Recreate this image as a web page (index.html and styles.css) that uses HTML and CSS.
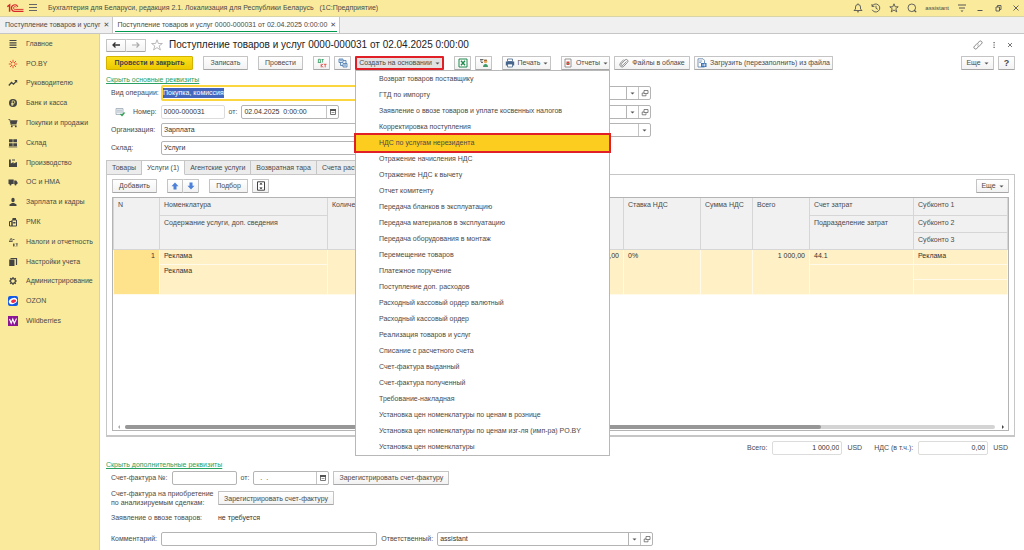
FILE: index.html
```html
<!DOCTYPE html>
<html lang="ru">
<head>
    <meta charset="UTF-8">
    <meta name="viewport" content="width=device-width, initial-scale=1.0">
    <title>Поступление товаров и услуг</title>
    <link rel="stylesheet" href="styles.css">
</head>
<body>
    <!-- Shared icons -->
    <svg class="sprite" aria-hidden="true">
        <symbol id="calendar" viewBox="0 0 8 8"><path d="M1.500 2.500h5v4h-5z" fill="none" stroke="#777"/><path d="M1 1h6v2H1z" fill="#555"/><path d="M2.500 4.500h3" stroke="#999"/></symbol>
        <symbol id="open" viewBox="0 0 8 8"><path d="M3 1.5h4v3H3zM1.2 4v2.8H5V5.2M1.2 4H3" fill="none" stroke="#666" stroke-width=".8"/></symbol>
        <symbol id="caret" viewBox="0 0 5 3"><path d="M.5.5h4l-2 2z" fill="#555"/></symbol>
    </svg>

    <header class="titlebar">
        <svg class="logo" viewBox="0 0 17 10"><path d="M.3 3.600 2.600 2V8.800" fill="none" stroke="#d8262c" stroke-width="1.500"/><path d="M10.800 3.800A3.300 3.300 0 1 0 8.200 8.400H16.500" fill="none" stroke="#d8262c" stroke-width="1.200"/><path d="M9.200 4.400A1.400 1.400 0 1 0 8.200 6.400H16.500" fill="none" stroke="#d8262c" stroke-width=".9"/></svg>
        <button class="plain" aria-label="Меню"><svg class="icon" viewBox="0 0 10 10"><path d="M1 1.500h8M1 4.500h8M1 7.500h8" stroke="#666"/></svg></button>
        <span class="app-name">Бухгалтерия для Беларуси, редакция 2.1. Локализация для Республики Беларусь &nbsp; (1С:Предприятие)</span>
        <nav class="window-tools">
            <button class="plain" aria-label="Уведомления"><svg class="icon" viewBox="0 0 10 10"><path d="M1 7.5h8L7.5 6V4a2.5 2.5 0 0 0-5 0v2zM4 8.8h2M5 1V.4" fill="none" stroke="#555" stroke-width=".9"/></svg></button>
            <button class="plain" aria-label="История"><svg class="icon" viewBox="0 0 10 10"><path d="M1.2 3.2A4 4 0 1 1 1.2 6.8M1 1v2.4h2.4M5 2.8V5.3l1.8 1" fill="none" stroke="#555" stroke-width=".9"/></svg></button>
            <button class="plain" aria-label="Избранное"><svg class="icon" viewBox="0 0 10 10"><path d="m5 .8 1.2 3h3L6.8 5.7l1 3.2L5 7 2.200 8.900l1-3.200L.8 3.800h3z" fill="none" stroke="#555" stroke-width=".9"/></svg></button>
            <button class="plain" aria-label="Поиск"><svg class="icon" viewBox="0 0 10 10"><circle cx="4.800" cy="4.800" r="3.800" fill="none" stroke="#555" stroke-width=".9"/><path d="M7 7l2.200 2.200" stroke="#555" stroke-width="1.200"/></svg></button>
            <span class="user">assistant</span>
            <button class="plain" aria-label="Настройки"><svg class="icon" viewBox="0 0 10 10"><path d="M1 2h8M2 5h6" stroke="#555"/><path d="M3.500 7.500h3L5 9z" fill="#555"/></svg></button>
            <button class="plain" aria-label="Свернуть"><svg class="icon" viewBox="0 0 10 10"><path d="M2.500 7.500h5" stroke="#555"/></svg></button>
            <button class="plain" aria-label="Развернуть"><svg class="icon" viewBox="0 0 10 10"><path d="M3 4h3.500v4H3zM4.500 4V2.500H8V6.500H6.500" fill="none" stroke="#555" stroke-width=".9"/></svg></button>
            <button class="plain" aria-label="Закрыть"><svg class="icon" viewBox="0 0 10 10"><path d="M2.500 2.500l5 5M7.500 2.500l-5 5" stroke="#555" stroke-width=".9"/></svg></button>
        </nav>
    </header>

    <nav class="doc-tabs">
        <a class="doc-tab" href="#list">Поступление товаров и услуг <span class="close">✕</span></a>
        <a class="doc-tab current" href="#doc">Поступление товаров и услуг 0000-000031 от 02.04.2025 0:00:00 <span class="close">✕</span></a>
    </nav>

    <div class="workspace">
        <nav class="sidebar">
            <div class="sections">
                <a href="#"><svg class="icon" viewBox="0 0 10 10"><path d="M1.500 1.500h7M1.500 3.800h7M1.500 6.200h7M1.500 8.500h7" stroke="#444" stroke-width="1.200"/></svg>Главное</a>
                <a href="#"><svg class="icon" viewBox="0 0 10 10"><path d="M5 .8v3M5 6.200v3M.8 5h3M6.200 5h3M2 2l2 2M6 6l2 2M8 2 6 4M2 8l2-2" stroke="#e2452c" stroke-width=".9"/></svg>PO.BY</a>
                <a href="#"><svg class="icon" viewBox="0 0 10 10"><path d="M.8 7.500 3.500 4.500 5.500 6.200 8.500 3" fill="none" stroke="#444" stroke-width="1.300"/><path d="M6.200 2h3v3z" fill="#444"/></svg>Руководителю</a>
                <a href="#"><svg class="icon" viewBox="0 0 10 10"><circle cx="5" cy="5" r="4" fill="#444"/><path d="M4.200 8V2.800h1.300a1.300 1.300 0 0 1 0 2.700H3.200M3.200 6.700h2.500" fill="none" stroke="#f9eb9b" stroke-width=".8"/></svg>Банк и касса</a>
                <a href="#"><svg class="icon" viewBox="0 0 10 10"><path d="M.5 1.500h1.300L3.200 7h5.300" fill="none" stroke="#444" stroke-width=".9"/><path d="M2.200 2.200h7.300L8.500 6H3.200z" fill="#444"/><circle cx="3.800" cy="8.400" r=".9" fill="#444"/><circle cx="7.800" cy="8.400" r=".9" fill="#444"/></svg>Покупки и продажи</a>
                <a href="#"><svg class="icon" viewBox="0 0 10 10"><path d="M1 1.200h3.700v3H1zM5.300 1.200H9v3H5.300zM1 5.200h3.700v3H1zM5.300 5.200H9v3H5.300z" fill="#444"/><path d="M.8 9h8.400" stroke="#444" stroke-width=".7"/></svg>Склад</a>
                <a href="#"><svg class="icon" viewBox="0 0 10 10"><path d="M1 9V1.500h1.800v4L5.500 4v1.500L9 4v5z" fill="#444"/><path d="M4 2h3" stroke="#444"/></svg>Производство</a>
                <a href="#"><svg class="icon" viewBox="0 0 10 10"><path d="M.5 2.500h5.200v4.500H.5zM6.200 3.500h2l1.300 1.700V7H6.200z" fill="#444"/><circle cx="2.500" cy="7.500" r="1" fill="#444"/><circle cx="7.500" cy="7.500" r="1" fill="#444"/></svg>ОС и НМА</a>
                <a href="#"><svg class="icon" viewBox="0 0 10 10"><ellipse cx="5" cy="3" rx="1.700" ry="2.200" fill="#444"/><path d="M1.500 9V7.500L4 6h2l2.500 1.500V9z" fill="#444"/></svg>Зарплата и кадры</a>
                <a href="#"><svg class="icon" viewBox="0 0 10 10"><path d="M1.500 4.500H4V9H1.500zM4 3h4.500v6H4z" fill="none" stroke="#444"/><path d="M4.500 1H8v2H4.500zM5.200 5h2.300v1.500H5.200z" fill="#444"/></svg>РМК</a>
                <a href="#"><svg class="icon" viewBox="0 0 10 10"><path d="M1 4.500h3.500M1.700 4.500 2.500 1.800H4V4.500M5.500 6.500v3M7 6.500 5.700 8 7 9.500M8 6.800h1.800M8.900 6.800v2.700M5 2.500h1.500" fill="none" stroke="#444" stroke-width=".8"/></svg>Налоги и отчетность</a>
                <a href="#"><svg class="icon" viewBox="0 0 10 10"><path d="M1.200 2.500h5.300V9H1.200z" fill="#444"/><path d="M2.500 1.500h6v6.500" fill="none" stroke="#444" stroke-width="1.200"/></svg>Настройки учета</a>
                <a href="#"><svg class="icon" viewBox="0 0 10 10"><circle cx="5" cy="5" r="2.400" fill="none" stroke="#444" stroke-width="1.200"/><path d="M5 1v1.500M5 7.500V9M1 5h1.500M7.500 5H9M2.200 2.200l1 1M6.800 6.800l1 1M7.800 2.200l-1 1M2.200 7.800l1-1" stroke="#444" stroke-width="1.200"/></svg>Администрирование</a>
                <a href="#"><svg class="icon" viewBox="0 0 10 10"><rect width="10" height="10" rx="2" fill="#1259e8"/><ellipse cx="5" cy="5" rx="4.300" ry="3" fill="#fff" transform="rotate(-20 5 5)"/><ellipse cx="5.500" cy="5.300" rx="2.600" ry="1.600" fill="#ee2b4b" transform="rotate(-15 5 5)"/></svg>OZON</a>
                <a href="#"><svg class="icon" viewBox="0 0 10 10"><rect width="10" height="10" fill="#8b1593"/><path d="M1.500 3 3.200 7.300 4.800 3 6.300 7.300 8.500 2.500" fill="none" stroke="#fff" stroke-width="1.100"/></svg>Wildberries</a>
            </div>
        </nav>

        <main class="document">
            <div class="heading">
                <div class="button-pair">
                    <button class="btn" aria-label="Назад"><svg class="icon" viewBox="0 0 10 10"><path d="M9 5H2M4.500 2.500 2 5l2.500 2.500" fill="none" stroke="#333" stroke-width="1.300"/></svg></button>
                    <button class="btn" aria-label="Вперед"><svg class="icon" viewBox="0 0 10 10"><path d="M1 5h7M5.500 2.500 8 5 5.500 7.500" fill="none" stroke="#aaa" stroke-width="1.200"/></svg></button>
                </div>
                <svg class="star" viewBox="0 0 12 12"><path d="m6 .8 1.400 3.700h4L8.200 6.900l1.200 4L6 8.600 2.600 10.900l1.200-4L.6 4.500h4z" fill="none" stroke="#aaa" stroke-width=".8"/></svg>
                <h1>Поступление товаров и услуг 0000-000031 от 02.04.2025 0:00:00</h1>
                <div class="heading-tools">
                    <button class="plain" aria-label="Ссылка"><svg class="icon" viewBox="0 0 10 10"><path d="M4.500 3.200 6.300 1.500a1.600 1.600 0 0 1 2.300 2.300L6.500 5.800a1.500 1.500 0 0 1-2 0M5.500 6.800 3.700 8.500a1.600 1.600 0 0 1-2.300-2.300L3.500 4.200a1.500 1.500 0 0 1 2 0" fill="none" stroke="#777" stroke-width=".9"/></svg></button>
                    <button class="plain" aria-label="Действия"><svg class="icon" viewBox="0 0 10 10"><path d="M4.500 2h1.200v1.200H4.500zM4.500 4.400h1.200v1.200H4.500zM4.500 6.800h1.200V8H4.500z" fill="#555"/></svg></button>
                    <button class="plain" aria-label="Закрыть"><svg class="icon" viewBox="0 0 10 10"><path d="M3 3l4 4M7 3 3 7" stroke="#777"/></svg></button>
                </div>
            </div>

            <div class="toolbar">
                <button class="btn primary w-post">Провести и закрыть</button>
                <button class="btn w-short">Записать</button>
                <button class="btn w-short">Провести</button>
                <div class="tool-group">
                    <button class="btn square" aria-label="Дт Кт"><svg class="icon" viewBox="0 0 10 10"><path d="M.8 4.500h3.400M1.400 4V1.300h2V4M4.500 1.500h2.200M5.600 1.500v3" fill="none" stroke="#2a9a58" stroke-width=".8"/><path d="M4.200 5.800v3.600M6 5.800 4.500 7.600 6 9.400M7 6.300h2.500M8.200 6.300v3" fill="none" stroke="#e03a30" stroke-width=".8"/></svg></button>
                    <button class="btn square" aria-label="Структура подчиненности"><svg class="icon" viewBox="0 0 10 10"><path d="M1 1h4v3.500H1zM5 5.500h4V9H5zM2.500 4.500v3H5M5 2.500h3v3" fill="#dbe8f6" stroke="#4878ae" stroke-width=".8"/><path d="M2 2.200h2M6 7h2" stroke="#4878ae" stroke-width=".8"/></svg></button>
                    <div class="dropdown">
                        <button class="btn create-btn">Создать на основании <svg class="caret"><use href="#caret"/></svg></button>
                        <ul class="menu">
                            <li><a href="#">Возврат товаров поставщику</a></li>
                            <li><a href="#">ГТД по импорту</a></li>
                            <li><a href="#">Заявление о ввозе товаров и уплате косвенных налогов</a></li>
                            <li><a href="#">Корректировка поступления</a></li>
                            <li class="selected"><a href="#">НДС по услугам нерезидента</a></li>
                            <li><a href="#">Отражение начисления НДС</a></li>
                            <li><a href="#">Отражение НДС к вычету</a></li>
                            <li><a href="#">Отчет комитенту</a></li>
                            <li><a href="#">Передача бланков в эксплуатацию</a></li>
                            <li><a href="#">Передача материалов в эксплуатацию</a></li>
                            <li><a href="#">Передача оборудования в монтаж</a></li>
                            <li><a href="#">Перемещение товаров</a></li>
                            <li><a href="#">Платежное поручение</a></li>
                            <li><a href="#">Поступление доп. расходов</a></li>
                            <li><a href="#">Расходный кассовый ордер валютный</a></li>
                            <li><a href="#">Расходный кассовый ордер</a></li>
                            <li><a href="#">Реализация товаров и услуг</a></li>
                            <li><a href="#">Списание с расчетного счета</a></li>
                            <li><a href="#">Счет-фактура выданный</a></li>
                            <li><a href="#">Счет-фактура полученный</a></li>
                            <li><a href="#">Требование-накладная</a></li>
                            <li><a href="#">Установка цен номенклатуры по ценам в рознице</a></li>
                            <li><a href="#">Установка цен номенклатуры по ценам изг-ля (имп-ра) PO.BY</a></li>
                            <li><a href="#">Установка цен номенклатуры</a></li>
                        </ul>
                    </div>
                </div>
                <div class="tool-group">
                    <button class="btn square" aria-label="Excel"><svg class="icon" viewBox="0 0 10 10"><path d="M1 1h8v8H1z" fill="#fff" stroke="#1f8a4c"/><path d="M3 2.800l4 4.400M7 2.800 3 7.200" stroke="#1f8a4c" stroke-width="1.400"/></svg></button>
                    <button class="btn square" aria-label="Контрагент"><svg class="icon" viewBox="0 0 10 10"><path d="M1 1.500h3.500M1 3h2.500M2 4.500h2" stroke="#444" stroke-width=".8"/><circle cx="6.500" cy="3.500" r="1.800" fill="#e8a862"/><path d="M4 9c0-4 5-4 5 0z" fill="#3d9a68"/><path d="M5 2.200h3" stroke="#7d4d20"/></svg></button>
                </div>
                <button class="btn w-print"><svg class="icon" viewBox="0 0 10 10"><path d="M2.500 1h5v2.500h-5z" fill="#fff" stroke="#47658c" stroke-width=".8"/><path d="M.8 3.500h8.400v4H.8z" fill="#47658c"/><path d="M2.500 6h5v3h-5z" fill="#fff" stroke="#47658c" stroke-width=".8"/></svg>Печать <svg class="caret"><use href="#caret"/></svg></button>
                <div class="tool-group">
                    <button class="btn w-print"><svg class="icon" viewBox="0 0 10 10"><path d="M2 1h6v8H2z" fill="#fff" stroke="#888" stroke-width=".9"/><path d="M3.500 3.500h3v3.500h-3z" fill="#d5433c"/><path d="M3.500 5.500h3" stroke="#5aa06a" stroke-width=".8"/></svg>Отчеты <svg class="caret"><use href="#caret"/></svg></button>
                    <button class="btn w-files"><svg class="icon" viewBox="0 0 10 10"><path d="M7.500 3.500 4 7.200a1 1 0 0 1-1.500-1.500L6 2a1.700 1.700 0 0 1 2.500 2.400L4.800 8.300A2.300 2.300 0 0 1 1.500 5L4.800 1.500" fill="none" stroke="#777" stroke-width=".8"/></svg>Файлы в облаке</button>
                    <button class="btn w-load"><svg class="icon" viewBox="0 0 10 10"><path d="M1 .8h5l1.500 1.500V9H1z" fill="#fff" stroke="#5a7fa8" stroke-width=".8"/><path d="M2.200 3h3M2.200 4.500h2" stroke="#5a7fa8" stroke-width=".7"/><path d="M4 5h5.500v4H4z" fill="#3f78b8"/><path d="M5 7h3M7 5.800 8.300 7 7 8.200" fill="none" stroke="#fff" stroke-width=".7"/></svg>Загрузить (перезаполнить) из файла</button>
                </div>
                <div class="tool-group end">
                    <button class="btn w-more">Еще <svg class="caret"><use href="#caret"/></svg></button>
                    <button class="btn square help">?</button>
                </div>
            </div>

            <a class="toggle" href="#main">Скрыть основные реквизиты</a>

            <form class="details">
                <div class="line">
                    <label for="operation">Вид операции:</label>
                    <div class="field focused wide">
                        <select id="operation" class="picked"><option>Покупка, комиссия</option></select>
                    </div>
                    <div class="field side">
                        <input type="text" aria-label="Контрагент"><button type="button" class="arrow" aria-label="Выбрать"><svg class="caret"><use href="#caret"/></svg></button><button type="button" aria-label="Открыть"><svg class="mini"><use href="#open"/></svg></button>
                    </div>
                </div>
                <div class="line">
                    <div class="number">
                        <svg class="icon" viewBox="0 0 10 10"><path d="M1 1.500h7v6H1z" fill="#eef2f6" stroke="#9aa8b5" stroke-width=".8"/><path d="M2 3.200h5M2 5h5" stroke="#9aa8b5" stroke-width=".7"/><path d="M5.500 7 7 8.500 9.500 5.500" fill="none" stroke="#2ea24e" stroke-width="1.300"/></svg>
                        <label for="number">Номер:</label>
                        <div class="field pale"><input type="text" id="number" value="0000-000031"></div>
                        <label for="date">от:</label>
                        <div class="field date"><input type="text" id="date" value="02.04.2025  0:00:00"><button type="button" aria-label="Календарь"><svg class="mini"><use href="#calendar"/></svg></button></div>
                    </div>
                    <div class="field side">
                        <input type="text" aria-label="Договор"><button type="button" class="arrow" aria-label="Выбрать"><svg class="caret"><use href="#caret"/></svg></button><button type="button" aria-label="Открыть"><svg class="mini"><use href="#open"/></svg></button>
                    </div>
                </div>
                <div class="line">
                    <label for="organization">Организация:</label>
                    <div class="field wide"><select id="organization"><option>Зарплата</option></select></div>
                    <div class="field side"><input type="text" aria-label="Счет"><button type="button" aria-label="Выбрать"><svg class="caret"><use href="#caret"/></svg></button></div>
                </div>
                <div class="line">
                    <label for="stock">Склад:</label>
                    <div class="field wide"><select id="stock"><option>Услуги</option></select></div>
                    <div class="side"></div>
                </div>
            </form>

            <section class="pages">
                <div class="page-tabs">
                    <button>Товары</button>
                    <button class="current">Услуги (1)</button>
                    <button>Агентские услуги</button>
                    <button>Возвратная тара</button>
                    <button>Счета расчетов</button>
                </div>
                <div class="page">
                    <div class="page-tools">
                        <button class="btn w-short">Добавить</button>
                        <div class="button-pair">
                            <button class="btn" aria-label="Вверх"><svg class="icon" viewBox="0 0 10 10"><path d="M5 1.500 8.500 5.200h-2v3.300h-3V5.200h-2z" fill="#4d80d8"/></svg></button>
                            <button class="btn" aria-label="Вниз"><svg class="icon" viewBox="0 0 10 10"><path d="M5 8.500 1.500 4.800h2V1.500h3v3.300h2z" fill="#4d80d8"/></svg></button>
                        </div>
                        <div class="tool-group">
                            <button class="btn w-pick">Подбор</button>
                            <button class="btn square" aria-label="Изменить высоту"><svg class="icon" viewBox="0 0 10 10"><path d="M1.500.8h7v8.400h-7z" fill="#fff" stroke="#444"/><path d="M5 2v1.500M5 6.500V8M3.800 3.300 5 2l1.200 1.300zM3.800 6.700 5 8l1.200-1.300z" fill="#444" stroke="#444" stroke-width=".5"/></svg></button>
                        </div>
                        <button class="btn w-more end">Еще <svg class="caret"><use href="#caret"/></svg></button>
                    </div>
                    <div class="grid">
                        <table>
                            <colgroup>
                                <col class="c-n"><col class="c-item"><col class="c-count"><col class="c-sum"><col class="c-rate"><col class="c-vat"><col class="c-total"><col class="c-account"><col class="c-sub">
                            </colgroup>
                            <thead>
                                <tr><th rowspan="3">N</th><th>Номенклатура</th><th rowspan="3">Количество</th><th rowspan="3"></th><th rowspan="3">Ставка НДС</th><th rowspan="3">Сумма НДС</th><th rowspan="3">Всего</th><th>Счет затрат</th><th>Субконто 1</th></tr>
                                <tr><th rowspan="2">Содержание услуги, доп. сведения</th><th rowspan="2">Подразделение затрат</th><th>Субконто 2</th></tr>
                                <tr><th>Субконто 3</th></tr>
                            </thead>
                            <tbody>
                                <tr><td rowspan="3" class="num active">1</td><td>Реклама</td><td rowspan="3"></td><td rowspan="3" class="num">1 000,00</td><td rowspan="3">0%</td><td rowspan="3"></td><td rowspan="3" class="num">1 000,00</td><td>44.1</td><td>Реклама</td></tr>
                                <tr><td rowspan="2">Реклама</td><td rowspan="2"></td><td></td></tr>
                                <tr><td></td></tr>
                            </tbody>
                        </table>
                        <div class="scroll">
                            <span class="scroll-left"></span>
                            <div class="track"><div class="thumb"></div></div>
                            <span class="scroll-right"></span>
                        </div>
                    </div>
                </div>
            </section>

            <div class="totals">
                <label for="total">Всего:</label>
                <div class="field pale"><input type="text" id="total" value="1 000,00"></div>
                <span>USD</span>
                <label for="vat" class="vat-label">НДС (в т.ч.):</label>
                <div class="field pale"><input type="text" id="vat" value="0,00"></div>
                <span>USD</span>
            </div>

            <a class="toggle" href="#extra">Скрыть дополнительные реквизиты</a>

            <form class="extra">
                <div class="line">
                    <label for="invoice">Счет-фактура №:</label>
                    <div class="field invoice"><input type="text" id="invoice"></div>
                    <label for="invoiceDate">от:</label>
                    <div class="field invoice-date"><input type="text" id="invoiceDate" value="  .  ."><button type="button" aria-label="Календарь"><svg class="mini"><use href="#calendar"/></svg></button></div>
                    <button type="button" class="btn w-register">Зарегистрировать счет-фактуру</button>
                </div>
                <div class="line tall">
                    <span class="caption">Счет-фактура на приобретение<br>по анализируемым сделкам:</span>
                    <button type="button" class="btn w-register">Зарегистрировать счет-фактуру</button>
                </div>
                <div class="line">
                    <span class="caption">Заявление о ввозе товаров:</span>
                    <span class="dark">не требуется</span>
                </div>
                <div class="line last">
                    <label for="comment">Комментарий:</label>
                    <div class="field wide"><input type="text" id="comment"></div>
                    <label for="responsible">Ответственный:</label>
                    <div class="field wide"><input type="text" id="responsible" value="assistant"><button type="button" class="arrow" aria-label="Выбрать"><svg class="caret"><use href="#caret"/></svg></button><button type="button" aria-label="Открыть"><svg class="mini"><use href="#open"/></svg></button></div>
                </div>
            </form>
        </main>
    </div>
</body>
</html>
```

FILE: styles.css
```css
* {
    box-sizing: border-box;
}

body {
    margin: 0;
    min-height: 100vh;
    display: flex;
    flex-direction: column;
    font: 7px/10px "Liberation Sans", Arial, sans-serif;
    color: #4a4a4a;
    background-color: #fff;
}

button, input, select {
    font: inherit;
    color: inherit;
    margin: 0;
    padding: 0;
}

a {
    color: inherit;
    text-decoration: none;
}

.sprite {
    display: none;
}

.icon {
    width: 10px;
    height: 10px;
    flex: none;
}

.caret {
    width: 5px;
    height: 3px;
    flex: none;
}

.mini {
    width: 8px;
    height: 8px;
}

.plain {
    display: flex;
    border: none;
    background: none;
}

.end {
    margin-left: auto;
}

/* Window title */
.titlebar {
    display: flex;
    align-items: center;
    height: 17px;
    padding: 0 3px 0 7px;
    background-color: #f9eb9b;
    border-bottom: 1px solid #d9d3a8;
}

.logo {
    width: 17px;
    height: 10px;
    margin-right: 4px;
}

.app-name {
    margin-left: 10px;
}

.window-tools {
    display: flex;
    align-items: center;
    gap: 8px;
    margin-left: auto;
}

.user {
    font-size: 6px;
}

/* Open documents */
.doc-tabs {
    display: flex;
    height: 17px;
    background-color: #f0f0f0;
    border-bottom: 1px solid #c6c6c6;
}

.doc-tab {
    display: flex;
    align-items: center;
    gap: 3px;
    padding: 0 3px 0 5px;
    border-right: 1px solid #c6c6c6;
}

.doc-tab.current {
    padding-left: 4px;
    background: linear-gradient(#009a4e, #009a4e) center bottom 1px / calc(100% - 4px) 1px no-repeat #fff;
}

.close {
    font: 7px/10px "DejaVu Sans", sans-serif;
}

.workspace {
    flex: 1;
    display: flex;
}

/* Sections */
.sidebar {
    flex: none;
    width: 100px;
    background-color: #f9eb9b;
    border-right: 1px solid #d9d3a8;
}

.sections {
    display: grid;
    grid-auto-rows: 1fr;
    height: 297px;
}

.sections a {
    display: flex;
    align-items: center;
    gap: 8px;
    padding-left: 8px;
}

.document {
    flex: 1;
    min-width: 0;
    padding: 4px 9px 0 6px;
}

.heading {
    display: flex;
    align-items: center;
    height: 14px;
}

.heading h1 {
    margin: 0;
    font-size: 10px;
    font-weight: normal;
    color: #222;
}

.star {
    width: 12px;
    height: 12px;
    margin: 0 6px 0 5px;
}

.heading-tools {
    display: flex;
    gap: 6px;
    margin-left: auto;
}

/* Buttons */
.btn {
    display: flex;
    align-items: center;
    justify-content: center;
    gap: 3px;
    height: 14px;
    border: 1px solid #c4c4c4;
    border-bottom-color: #a6a6a6;
    border-radius: 1px;
    background: linear-gradient(#fff, #f2f2f2);
    white-space: nowrap;
}

.primary {
    border-color: #d3b200;
    background: linear-gradient(#fbe01a, #ecc900);
    color: #444;
    font-weight: bold;
}

.button-pair {
    display: flex;
}

.button-pair .btn {
    width: 20px;
    height: 13px;
}

.button-pair .btn + .btn {
    border-left: none;
}

.square {
    width: 17px;
}

.help {
    font-size: 9px;
    font-weight: bold;
}

.w-post { width: 87px; }
.w-short { width: 45px; }
.w-print { width: 49px; }
.w-files { width: 76px; }
.w-load { width: 139px; }
.w-more { width: 33px; }
.w-pick { width: 39px; }
.w-register { width: 116px; }

.toolbar {
    display: flex;
    align-items: center;
    gap: 10px;
    margin-top: 4px;
}

.tool-group {
    display: flex;
    align-items: center;
    gap: 4px;
}

.tool-group.end {
    margin-left: auto;
}

.dropdown {
    position: relative;
}

.create-btn {
    width: 89px;
    border: 2px solid #e01f26;
    background: #e2e2e2;
}

.menu {
    position: absolute;
    z-index: 1;
    top: 14px;
    left: 0;
    width: 255px;
    margin: 0;
    padding: 0;
    list-style: none;
    background-color: #fff;
    border: 1px solid #b8b8b8;
}

.menu a {
    display: block;
    padding-left: 23px;
    line-height: 16px;
}

.menu .selected {
    background-color: #fccd1f;
    outline: 2px solid #e01f26;
}

/* Document fields */
.toggle {
    display: inline-block;
    margin-top: 5px;
    color: #2aa062;
    text-decoration: underline;
}

.details {
    display: flex;
    flex-direction: column;
    gap: 4px;
    width: 60%;
    padding-left: 5px;
}

.line {
    display: flex;
    align-items: center;
    gap: 6px;
    white-space: nowrap;
}

.details label {
    width: 44px;
}

.field {
    display: flex;
    height: 14px;
    border: 1px solid #b4b4b4;
    border-radius: 2px;
    background-color: #fff;
    color: #333;
}

.field input, .field select {
    flex: 1;
    min-width: 0;
    padding: 0 2px;
    border: none;
    background: none;
    appearance: none;
    outline: none;
    white-space: pre;
}

.field button {
    display: flex;
    align-items: center;
    justify-content: center;
    width: 12px;
    border: none;
    border-left: 1px solid #c4c4c4;
    background: none;
}

.field .arrow {
    border-left-color: #b4b4b4;
}

.field.pale {
    border-color: #dcdcdc;
}

.field.focused {
    height: 16px;
    border: 2px solid #fbd63f;
    align-items: center;
}

.field .picked {
    flex: none;
    field-sizing: content;
    padding: 0;
    background-color: #4467bd;
    color: #fff;
}

.wide {
    flex: 1;
}

.side {
    width: 240px;
}

.number {
    flex: 1;
    display: flex;
    align-items: center;
    gap: 4px;
}

.number .icon {
    margin: 0 4px;
}

.details .number label {
    width: auto;
}

.number .pale {
    width: 64px;
}

.date {
    width: 98px;
}

/* Tabular sections */
.pages {
    margin-top: 5px;
}

.page-tabs {
    display: flex;
}

.page-tabs button {
    height: 15px;
    padding: 0 5px;
    border: 1px solid #c6c6c6;
    border-left-width: 0;
    background-color: #ececec;
}

.page-tabs button:first-child {
    border-left-width: 1px;
}

.page-tabs .current {
    background-color: #fff;
    border-bottom-color: #fff;
}

.page {
    margin-top: -1px;
    padding: 4px 5px;
    border: 1px solid #c6c6c6;
    border-bottom-width: 2px;
}

.page-tools {
    display: flex;
    gap: 10px;
}

.page-tools .button-pair .btn {
    width: 16px;
    height: 14px;
}

.grid {
    display: flex;
    flex-direction: column;
    height: 234px;
    margin-top: 4px;
    border: 1px solid #b4b4b4;
}

table {
    width: 100%;
    table-layout: fixed;
    border-collapse: collapse;
}

.c-n { width: 46px; }
.c-item { width: 168px; }
.c-count { width: 90px; }
.c-rate { width: 77px; }
.c-vat { width: 52px; }
.c-total { width: 57px; }
.c-account { width: 104px; }
.c-sub { width: 94px; }

th, td {
    padding: 2px 4px;
    font-weight: normal;
    text-align: left;
    vertical-align: top;
    white-space: nowrap;
    overflow: hidden;
}

th {
    height: 17px;
    background-color: #f1f1f1;
    border: 1px solid #d6d6d6;
    border-top: none;
}

td {
    height: 15px;
    padding-top: 1px;
    background-color: #fff1c5;
    border: 1px solid #fffaea;
    color: #333;
}

.num {
    text-align: right;
}

td.active {
    background-color: #ffe28c;
}

.scroll {
    display: flex;
    align-items: center;
    gap: 5px;
    margin-top: auto;
    padding: 1px 4px 1px 5px;
}

.scroll-left, .scroll-right {
    border: 2px solid transparent;
    border-left-width: 0;
    border-right: 2px solid #aaa;
}

.scroll-right {
    margin-left: 2px;
    border-left: 2px solid #444;
    border-right-width: 0;
}

.track {
    flex: 1;
    height: 4px;
    border-radius: 2px;
    background-color: #d4d4d4;
}

.thumb {
    width: 80%;
    height: 4px;
    border-radius: 2px;
    background-color: #979797;
}

.totals {
    display: flex;
    align-items: center;
    justify-content: flex-end;
    gap: 5px;
    margin-top: 4px;
    padding-right: 7px;
}

.totals .field {
    width: 70px;
}

.totals input {
    text-align: right;
}

.vat-label {
    margin-left: 7px;
}

/* Additional fields */
.extra {
    display: flex;
    flex-direction: column;
    gap: 4px;
    margin-top: 1px;
    padding-left: 5px;
}

.extra .line {
    gap: 4px;
    min-height: 14px;
}

.extra .tall {
    line-height: 9px;
}

.caption {
    width: 103px;
}

.invoice {
    width: 65px;
}

.invoice-date {
    width: 76px;
}

.extra .last {
    width: 60%;
    margin-top: 3px;
}

.dark {
    color: #333;
}
```
